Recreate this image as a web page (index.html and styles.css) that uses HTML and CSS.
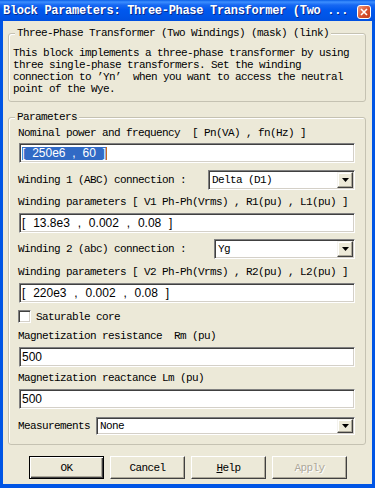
FILE: index.html
```html
<!DOCTYPE html>
<html lang="en">
<head>
  <meta charset="UTF-8" />
  <meta name="viewport" content="width=device-width, initial-scale=1.0" />
  <title>Block Parameters</title>
  <link rel="stylesheet" href="styles.css">
</head>
<body>
  <div class="window">
    <div class="titlebar">
      <span class="title">Block Parameters: Three-Phase Transformer (Two ...</span>
      <span class="close">
        <svg width="8" height="8" viewBox="0 0 8 8"><path d="M1 1L7 7M7 1L1 7" stroke="#fff" stroke-width="1.6" /></svg>
      </span>
    </div>

    <div class="client">
      <fieldset class="group intro">
        <legend>Three-Phase Transformer (Two Windings) (mask) (link)</legend>
        <p>This block implements a three-phase transformer by using<br>three single-phase transformers. Set the winding<br>connection to ’Yn’  when you want to access the neutral<br>point of the Wye.</p>
      </fieldset>

      <fieldset class="group params">
        <legend>Parameters</legend>
        <div class="body">
          <div class="label first">Nominal power and frequency  [ Pn(VA) , fn(Hz) ]</div>
          <div class="field"><span class="sel">[ 250e6 , 60 ]</span><span class="caret"></span></div>

          <div class="row r1">
            <span class="label">Winding 1 (ABC) connection :</span>
            <div class="combo w1"><span class="value">Delta (D1)</span><span class="arrow"><svg width="7" height="4" viewBox="0 0 7 4"><path d="M0 0H7L3.5 4Z" /></svg></span></div>
          </div>

          <div class="label l2">Winding parameters [ V1 Ph-Ph(Vrms) , R1(pu) , L1(pu) ]</div>
          <div class="field">[ 13.8e3 , 0.002 , 0.08 ]</div>

          <div class="row r2">
            <span class="label">Winding 2 (abc) connection :</span>
            <div class="combo w2"><span class="value">Yg</span><span class="arrow"><svg width="7" height="4" viewBox="0 0 7 4"><path d="M0 0H7L3.5 4Z" /></svg></span></div>
          </div>

          <div class="label l3">Winding parameters [ V2 Ph-Ph(Vrms) , R2(pu) , L2(pu) ]</div>
          <div class="field">[ 220e3 , 0.002 , 0.08 ]</div>

          <div class="check">
            <span class="box"></span>
            <span>Saturable core</span>
          </div>

          <div class="label l4">Magnetization resistance  Rm (pu)</div>
          <div class="field">500</div>

          <div class="label l5">Magnetization reactance Lm (pu)</div>
          <div class="field">500</div>

          <div class="row r3">
            <span class="label">Measurements</span>
            <div class="combo grow"><span class="value">None</span><span class="arrow"><svg width="7" height="4" viewBox="0 0 7 4"><path d="M0 0H7L3.5 4Z" /></svg></span></div>
          </div>
        </div>
      </fieldset>

      <div class="buttons">
        <button class="btn default">OK</button>
        <button class="btn">Cancel</button>
        <button class="btn"><u>H</u>elp</button>
        <button class="btn disabled">Apply</button>
      </div>
    </div>
  </div>
</body>
</html>
```

FILE: styles.css
```css
body {
  margin: 0;
  font-family: "Liberation Mono", "DejaVu Sans Mono", monospace;
  font-size: 11px;
  letter-spacing: -0.6px;
  color: #000;
}

.window {
  width: 375px;
  height: 488px;
  background: #0055e5;
  display: flex;
  flex-direction: column;
}

.titlebar {
  height: 21px;
  display: flex;
  align-items: center;
  padding-left: 3px;
  background: linear-gradient(#0a5fe8 0, #3d8fff 2px, #1768f2 5px, #0058ee 10px, #0054e6 17px, #0050e0 21px);
}

.title {
  color: #fff;
  font-weight: bold;
  font-size: 12px;
  letter-spacing: -0.3px;
  text-shadow: 1px 1px #0a2a8a;
  white-space: pre;
  margin-top: 1px;
}

.close {
  margin-left: auto;
  margin-right: 4px;
  margin-top: 2px;
  width: 12px;
  height: 12px;
  border: 1px solid #fff;
  border-radius: 3px;
  background: linear-gradient(135deg, #f29a7c, #d8522f 55%, #c03c1c);
  display: flex;
  align-items: center;
  justify-content: center;
}

.client {
  flex: 1;
  margin: 0 3px 4px;
  background: #ece9d8;
  display: flex;
  flex-direction: column;
}

.group {
  margin: 6px 6px 0 5px;
  padding: 0;
  border: 1px solid #c5c2b2;
  border-radius: 3px;
  box-shadow: inset 1px 1px #fff;
  min-width: 0;
}

.group legend {
  margin-left: 6px;
  padding: 0 2px;
  line-height: 13px;
  white-space: pre;
  background: #ece9d8;
}

.intro p {
  margin: 7px 0 0;
  padding: 0 0 6px 4px;
  line-height: 12px;
  white-space: pre;
}

.params {
  margin-top: 9px;
}

.params .body {
  padding: 0 10px 9px 9px;
}

.label {
  line-height: 13px;
  white-space: pre;
}

.label.first { margin-top: 3px; }
.label.l2 { margin-top: 6px; }
.label.l3 { margin-top: 7px; }
.label.l4 { margin-top: 7px; }
.label.l5 { margin-top: 5px; }

.field {
  height: 20px;
  box-sizing: border-box;
  margin: 3px 0 0 1px;
  padding: 0 0 0 2px;
  background: #fff;
  border: 1px solid;
  border-color: #808080 #fff #fff #808080;
  box-shadow: inset 1px 1px #404040, inset -1px -1px #d4d0c8;
  display: flex;
  align-items: center;
  font-family: "Liberation Sans", Arial, sans-serif;
  font-size: 12px;
  letter-spacing: 0;
  word-spacing: 4.5px;
  white-space: pre;
}

.field + .row,
.field + .check {
  margin-top: 7px;
}

.label + .field {
  margin-top: 4px;
}

.label.first + .field {
  margin-top: 3px;
}

.sel {
  background: #316ac5;
  color: #fff;
  line-height: 13px;
  word-spacing: 3.5px;
}

.caret {
  width: 1px;
  height: 13px;
  background: #c07020;
}

.row {
  display: flex;
  align-items: center;
  height: 20px;
}

.row.r2 { margin-top: 6px; }

.row.r3 {
  margin-top: 8px;
  height: 18px;
  gap: 6px;
}

.combo {
  height: 100%;
  box-sizing: border-box;
  margin-left: auto;
  background: #fff;
  border: 1px solid;
  border-color: #808080 #fff #fff #808080;
  box-shadow: inset 1px 1px #404040, inset -1px -1px #d4d0c8;
  display: flex;
  align-items: stretch;
  padding: 1px;
}

.combo.w1 { width: 147px; }
.combo.w2 { width: 141px; }
.combo.grow { flex: 1; }

.combo .value {
  flex: 1;
  padding-left: 2px;
  display: flex;
  align-items: center;
  white-space: pre;
}

.combo .arrow {
  width: 16px;
  box-sizing: border-box;
  background: #ece9d8;
  border: 1px solid;
  border-color: #f4f3ee #404040 #404040 #f4f3ee;
  box-shadow: inset -1px -1px #aca899, inset 1px 1px #fff;
  display: flex;
  align-items: center;
  justify-content: center;
}

.check {
  display: flex;
  align-items: center;
  gap: 5px;
  height: 13px;
}

.check .box {
  width: 13px;
  height: 13px;
  box-sizing: border-box;
  background: #fff;
  border: 1px solid;
  border-color: #808080 #fff #fff #808080;
  box-shadow: inset 1px 1px #404040, inset -1px -1px #d4d0c8;
}

.buttons {
  display: flex;
  gap: 6px;
  padding-left: 26px;
  margin-top: 11px;
}

.btn {
  width: 75px;
  height: 23px;
  padding: 0;
  font: inherit;
  letter-spacing: -0.6px;
  color: #000;
  background: #ece9d8;
  border: 1px solid;
  border-color: #fff #404040 #404040 #fff;
  box-shadow: inset -1px -1px #aca899;
}

.btn.default {
  border-color: #000;
  box-shadow: inset 1px 1px #fff, inset -1px -1px #404040, inset -2px -2px #aca899;
}

.btn.disabled {
  color: #aca899;
  text-shadow: 1px 1px #fff;
}
```
